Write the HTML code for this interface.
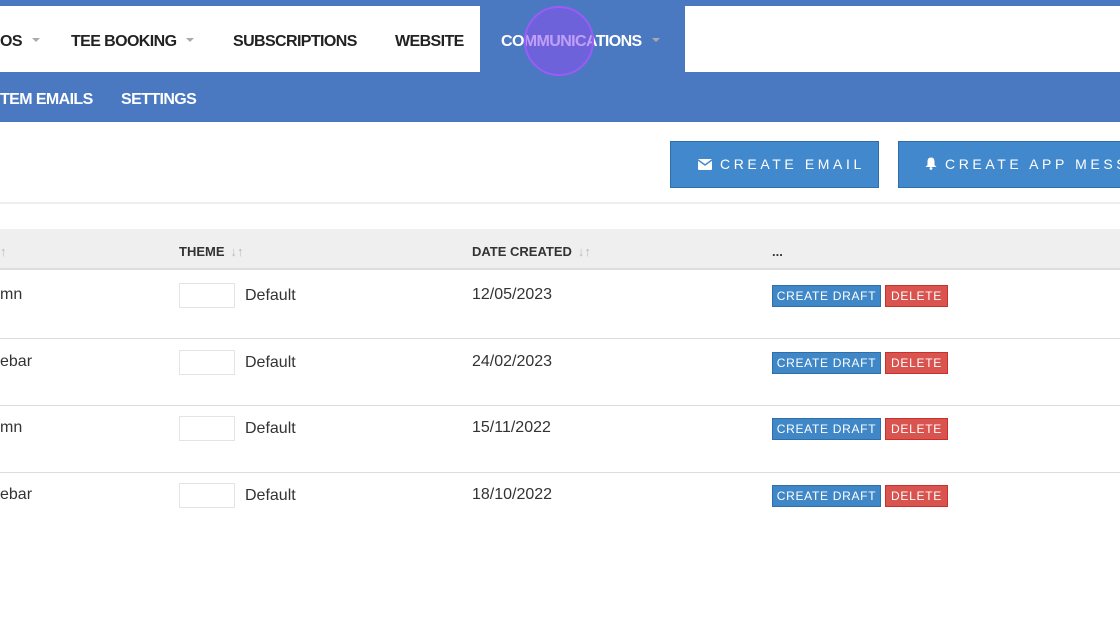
<!DOCTYPE html>
<html><head><style>
*{margin:0;padding:0;box-sizing:border-box}
body{width:1120px;height:626px;overflow:hidden;background:#fff;font-family:"Liberation Sans",sans-serif;position:relative;color:#333}
.a{position:absolute;white-space:nowrap}
.nav{font-size:16px;font-weight:bold;color:#222;top:33px;letter-spacing:-0.6px}
.car{display:inline-block;border-left:4px solid transparent;border-right:4px solid transparent;border-top:4px solid #aaa;vertical-align:middle;margin-left:10px;margin-top:-4px}
.sub{font-size:16px;font-weight:bold;color:#fff;top:91px;letter-spacing:-0.6px}
.btn{position:absolute;background:#4189cc;border:1px solid #2f6ea8;color:#fff;font-size:14px;letter-spacing:3.6px;height:47px;top:141px;line-height:45px;white-space:nowrap;overflow:hidden}
.th{font-size:13px;font-weight:bold;color:#333;top:244px}
.sort{color:#bbb;font-weight:normal;margin-left:6px}
.cell{font-size:16px;color:#333}
.sw{position:absolute;left:179px;width:56px;height:25px;border:1px solid #e4e4e4;background:#fff}
.b2{position:absolute;height:22px;line-height:20px;font-size:12px;color:#fff;letter-spacing:0.7px;text-align:center;white-space:nowrap}
.bd{left:772px;width:109px;background:#3f87c7;border:1px solid #2f6ea8}
.bx{left:885px;width:63px;background:#d9534f;border:1px solid #c9302c}
.hr{position:absolute;left:0;width:1120px;height:1px;background:#ddd}
</style></head><body>
<div class="a" style="left:0;top:0;width:1120px;height:6px;background:#4a79c2"></div>
<div class="a" style="left:480px;top:6px;width:205px;height:66px;background:#4a79c2"></div>
<div class="a" style="left:0;top:72px;width:1120px;height:50px;background:#4a79c2"></div>
<div class="a nav" style="left:0">OS<span class="car"></span></div>
<div class="a nav" style="left:71px">TEE BOOKING<span class="car"></span></div>
<div class="a nav" style="left:233px">SUBSCRIPTIONS</div>
<div class="a nav" style="left:395px">WEBSITE</div>
<div class="a nav" style="left:501px;color:#fff">COMMUNICATIONS<span class="car"></span></div>
<div class="a" style="left:524px;top:6px;width:70px;height:70px;border-radius:50%;background:rgba(140,80,240,0.55);border:2px solid #9a5cf5"></div>
<div class="a sub" style="left:0">TEM EMAILS</div>
<div class="a sub" style="left:121px">SETTINGS</div>
<div class="btn" style="left:670px;width:209px;padding-left:27px"><svg width="14" height="11" viewBox="0 0 14 11" style="vertical-align:-1px;margin-right:8px"><rect x="0" y="0" width="14" height="11" rx="1" fill="#fff"/><path d="M0 1 L7 6 L14 1" stroke="#4189cc" stroke-width="1.5" fill="none"/></svg>CREATE EMAIL</div>
<div class="btn" style="left:898px;width:240px;padding-left:26px"><svg width="12" height="13" viewBox="0 0 12 13" style="vertical-align:-1px;margin-right:8px"><path d="M6 0.5 C3 0.5 2.5 3 2.5 5 L2.5 8 L0.5 10 L11.5 10 L9.5 8 L9.5 5 C9.5 3 9 0.5 6 0.5Z" fill="#fff"/><circle cx="6" cy="11.5" r="1.4" fill="#fff"/></svg>CREATE APP MESSAGE</div>
<div class="hr" style="top:202px;background:#eee;height:2px"></div>
<div class="a" style="left:0;top:229px;width:1120px;height:41px;background:#efefef;border-bottom:2px solid #ddd"></div>
<div class="a th" style="left:0"><span class="sort" style="margin:0">↑</span></div>
<div class="a th" style="left:179px">THEME<span class="sort">↓↑</span></div>
<div class="a th" style="left:472px">DATE CREATED<span class="sort">↓↑</span></div>
<div class="a th" style="left:772px">...</div>

<div class="a cell" style="left:0;top:286px">mn</div><div class="sw" style="top:283px"></div><div class="a cell" style="left:245px;top:287px">Default</div><div class="a cell" style="left:472px;top:286px">12/05/2023</div>
<div class="b2 bd" style="top:285px">CREATE DRAFT</div><div class="b2 bx" style="top:285px">DELETE</div>
<div class="hr" style="top:338px"></div>
<div class="a cell" style="left:0;top:353px">ebar</div><div class="sw" style="top:350px"></div><div class="a cell" style="left:245px;top:354px">Default</div><div class="a cell" style="left:472px;top:353px">24/02/2023</div>
<div class="b2 bd" style="top:352px">CREATE DRAFT</div><div class="b2 bx" style="top:352px">DELETE</div>
<div class="hr" style="top:405px"></div>
<div class="a cell" style="left:0;top:419px">mn</div><div class="sw" style="top:416px"></div><div class="a cell" style="left:245px;top:420px">Default</div><div class="a cell" style="left:472px;top:419px">15/11/2022</div>
<div class="b2 bd" style="top:418px">CREATE DRAFT</div><div class="b2 bx" style="top:418px">DELETE</div>
<div class="hr" style="top:472px"></div>
<div class="a cell" style="left:0;top:486px">ebar</div><div class="sw" style="top:483px"></div><div class="a cell" style="left:245px;top:487px">Default</div><div class="a cell" style="left:472px;top:486px">18/10/2022</div>
<div class="b2 bd" style="top:485px">CREATE DRAFT</div><div class="b2 bx" style="top:485px">DELETE</div>
</body></html>
